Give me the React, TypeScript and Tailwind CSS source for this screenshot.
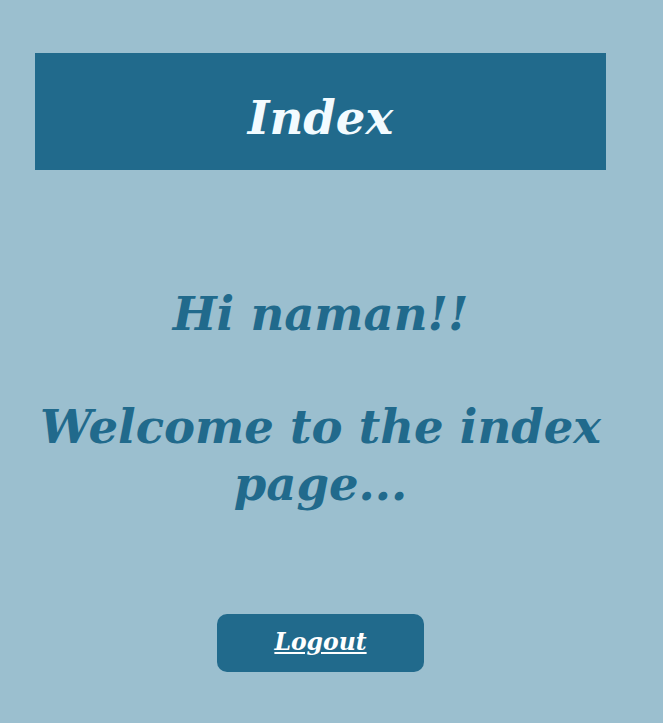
import React from 'react';

const serif = { fontFamily: '"DejaVu Serif", serif' };

export default function App() {
  return (
    <div className="min-h-[723px] w-full bg-[#9bbfcf] pt-[53px]" style={serif}>
      <div className="ml-[35px] flex w-[571px] flex-col items-center">
        <div className="flex h-[117px] w-full items-center justify-center bg-[#216a8c] pt-[14px]">
          <h1 className="text-[46.5px] font-bold italic leading-none text-[#f2fbff]">Index</h1>
        </div>
        <h2 className="mt-[115px] text-center text-[46.5px] font-bold italic leading-[57px] text-[#216a8c]">Hi naman!!</h2>
        <h2 className="mt-[56px] text-center text-[46.5px] font-bold italic leading-[57px] text-[#216a8c]">
          Welcome to the index page...
        </h2>
        <button className="mt-[102px] flex h-[58px] w-[207px] items-center justify-center rounded-[10px] bg-[#216a8c]">
          <span className="text-[23.5px] font-bold italic text-white underline">Logout</span>
        </button>
      </div>
    </div>
  );
}
